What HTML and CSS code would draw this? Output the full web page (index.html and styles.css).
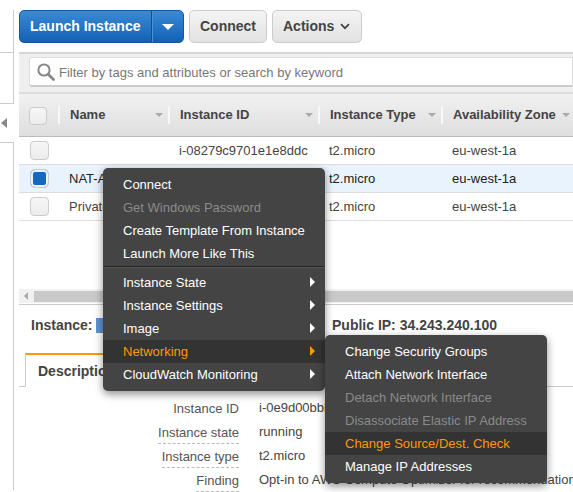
FILE: index.html
```html
<!DOCTYPE html>
<html lang="en">
	<head>
		<meta name="viewport" content="width=device-width, initial-scale=1">
		<title>Instances</title>
		<link rel="stylesheet" href="styles.css">
	</head>

	<body>
		<div id="side">
			<div class="side-box first"></div>
			<div class="side-box second"></div>
			<div class="side-toggle"><span class="arrow-left"></span></div>
			<div class="side-box last"></div>
		</div>

		<div id="main">
			<div id="toolbar">
				<div class="split-btn">
					<span class="launch">Launch Instance</span>
					<span class="launch-caret"><span class="caret-white"></span></span>
				</div>
				<span class="btn connect">Connect</span>
				<span class="btn actions">Actions
					<svg class="chevron" width="10" height="7" viewBox="0 0 10 7"><path d="M1 1.2 L5 5.2 L9 1.2" fill="none" stroke="#444" stroke-width="1.7"/></svg>
				</span>
			</div>

			<div id="grid">
				<div id="filter">
					<div class="search">
						<svg width="20" height="20" viewBox="0 0 20 20"><circle cx="8" cy="8" r="5.6" fill="none" stroke="#888" stroke-width="2"/><path d="M12.2 12.2 L17.5 17.5" stroke="#888" stroke-width="2.8" stroke-linecap="round"/></svg>
						<span class="search-text">Filter by tags and attributes or search by keyword</span>
					</div>
				</div>

				<div class="row head">
					<div class="cell check-cell"><span class="check"></span></div>
					<div class="cell">Name<span class="sort"></span></div>
					<div class="cell">Instance ID<span class="sort"></span></div>
					<div class="cell">Instance Type<span class="sort"></span></div>
					<div class="cell last-cell">Availability Zone<span class="sort"></span></div>
				</div>
				<div class="row">
					<div class="cell check-cell"><span class="check"></span></div>
					<div class="cell"></div>
					<div class="cell">i-08279c9701e1e8ddc</div>
					<div class="cell">t2.micro</div>
					<div class="cell">eu-west-1a</div>
				</div>
				<div class="row selected">
					<div class="cell check-cell"><span class="check on"></span></div>
					<div class="cell">NAT-A</div>
					<div class="cell"></div>
					<div class="cell">t2.micro</div>
					<div class="cell">eu-west-1a</div>
				</div>
				<div class="row">
					<div class="cell check-cell"><span class="check"></span></div>
					<div class="cell">Private</div>
					<div class="cell"></div>
					<div class="cell">t2.micro</div>
					<div class="cell">eu-west-1a</div>
				</div>

				<div id="grid-space"></div>

				<div id="hscroll">
					<span class="scroll-left"></span>
					<div class="thumb"></div>
				</div>
			</div>

			<div id="summary">
				<span class="summary-id">Instance: <span class="id-chip"></span></span>
				<span class="summary-ip">Public IP: 34.243.240.100</span>
			</div>

			<div id="tabs">
				<div class="tab">Description</div>
			</div>

			<div id="details">
				<div class="label">Instance ID</div><div class="value">i-0e9d00bbb</div>
				<div class="label"><span class="dashed">Instance state</span></div><div class="value">running</div>
				<div class="label"><span class="dashed">Instance type</span></div><div class="value">t2.micro</div>
				<div class="label"><span class="dashed">Finding</span></div><div class="value">Opt-in to AWS Compute Optimizer for recommendations</div>
			</div>
		</div>

		<div id="menu" class="menu">
			<a>Connect</a>
			<a class="off">Get Windows Password</a>
			<a>Create Template From Instance</a>
			<a>Launch More Like This</a>
			<div class="sep"></div>
			<a class="sub">Instance State</a>
			<a class="sub">Instance Settings</a>
			<a class="sub">Image</a>
			<a class="sub hot">Networking</a>
			<a class="sub">CloudWatch Monitoring</a>
		</div>

		<div id="submenu" class="menu">
			<a>Change Security Groups</a>
			<a>Attach Network Interface</a>
			<a class="off">Detach Network Interface</a>
			<a class="off">Disassociate Elastic IP Address</a>
			<a class="hot">Change Source/Dest. Check</a>
			<a>Manage IP Addresses</a>
		</div>
	</body>

</html>
```

FILE: styles.css
```css
* {
	box-sizing: border-box;
}
html {
	font-family: "Liberation Sans", Arial, sans-serif;
	font-size: 13px;
	color: #444;
	background: white;
}
body {
	margin: 0;
	width: 573px;
	height: 492px;
	overflow: hidden;
	position: relative;
	display: flex;
}

/* left collapsed panel */
#side {
	width: 14px;
	flex: none;
	padding-top: 10px;
	display: flex;
	flex-direction: column;
}
.side-box {
	border-right: solid 1px #ccc;
}
.side-box.first {
	height: 43px;
	border-bottom: solid 1px #ccc;
}
.side-box.second {
	height: 51px;
	border-bottom: solid 1px #ccc;
}
.side-toggle {
	height: 38px;
	display: flex;
	align-items: center;
	padding-left: 1px;
}
.arrow-left {
	border: solid 5px transparent;
	border-left: 0;
	border-right: solid 6px #888;
}
.side-box.last {
	height: 348px;
	border-top: solid 1px #ccc;
}

#main {
	width: 554px;
	margin-left: 5px;
	flex: none;
}

/* toolbar */
#toolbar {
	height: 43px;
	padding-top: 10px;
	display: flex;
	gap: 5px;
}
.split-btn {
	display: flex;
	height: 33px;
	border-radius: 5px;
	overflow: hidden;
	background: linear-gradient(#3b8ad6, #1261b5);
	border: solid 1px #15589f;
	color: white;
	font-size: 14px;
	font-weight: bold;
}
.launch {
	width: 132px;
	line-height: 31px;
	padding-left: 10px;
	border-right: solid 1px #0f4f94;
}
.launch-caret {
	width: 31px;
	border-left: solid 1px #4d91d3;
	display: flex;
	align-items: center;
	justify-content: center;
}
.caret-white {
	border: solid 6px transparent;
	border-bottom: 0;
	border-top: solid 6px white;
}
.btn {
	height: 33px;
	line-height: 31px;
	padding: 0 10px;
	border: solid 1px #ccc;
	border-radius: 5px;
	background: linear-gradient(#f4f4f4, #e2e2e2);
	font-size: 14px;
	font-weight: bold;
}
.connect {
	width: 78px;
}
.actions {
	width: 90px;
}
.chevron {
	margin-left: 2px;
	vertical-align: 1px;
}

/* instance table */
#grid {
	margin-top: 9px;
	width: 554px;
	border-top: solid 2px #d5d5d5;
}
#filter {
	height: 40px;
	padding: 3px 0 0 10px;
	background: #efefef;
	border-bottom: solid 2px #ddd;
}
.search {
	height: 30px;
	display: flex;
	align-items: center;
	gap: 3px;
	padding-left: 6px;
	background: white;
	border: solid 1px #ddd;
	border-bottom: solid 2px #ccc;
	border-radius: 3px 0 0 3px;
	color: #777;
}
.search-text {
	padding-top: 2px;
}
.row {
	display: grid;
	grid-template-columns: 41px 110px 150px 123px 1fr;
	height: 28px;
	align-items: center;
	border-bottom: solid 1px #ddd;
}
.row .cell {
	padding-left: 9px;
	white-space: nowrap;
	position: relative;
}
.row .check-cell {
	padding-left: 11px;
}
.row.head {
	height: 43px;
	background: linear-gradient(#f1f1f1, #dedede);
	border-bottom: solid 1px #bbb;
	font-weight: bold;
}
.row.head .cell {
	height: 18px;
	line-height: 18px;
	padding-left: 10px;
	border-right: solid 2px #f8f8f8;
}
.row.head .check-cell {
	padding-left: 10px;
}
.row.head .last-cell {
	border-right: 0;
}
.row.selected {
	background: #e9f3fd;
	color: #222;
}
.sort {
	position: absolute;
	right: 5px;
	top: 7px;
	border: solid 4px transparent;
	border-bottom: 0;
	border-top: solid 4px #aaa;
}
.row.head .last-cell .sort {
	right: 3px;
}
.check {
	display: block;
	width: 19px;
	height: 19px;
	border: solid 1px #ccc;
	border-radius: 4px;
	background: linear-gradient(#f7f7f7, #ececec);
}
.row.head .check {
	width: 18px;
	height: 18px;
	margin-top: 1px;
}
.check.on {
	border-radius: 5px;
	background: #1668bf;
	box-shadow: inset 0 0 0 2px #eef2f7;
}
#grid-space {
	height: 68px;
}
#hscroll {
	height: 14px;
	display: flex;
	align-items: center;
	background: #f1f1f1;
	padding-left: 5px;
	gap: 6px;
}
.scroll-left {
	border: solid 4px transparent;
	border-left: 0;
	border-right: solid 4px #aaa;
}
.thumb {
	flex: 1;
	height: 11px;
	background: #c9c9c9;
}

/* details */
#summary {
	margin-top: 1px;
	border-top: solid 1px #ccc;
	height: 41px;
	display: flex;
	align-items: center;
	padding: 0 0 0 12px;
	font-size: 14px;
	font-weight: bold;
}
.summary-id {
	width: 301px;
}
.id-chip {
	display: inline-block;
	width: 60px;
	height: 15px;
	vertical-align: -3px;
	background: #5b93d1;
}
#tabs {
	margin-top: 8px;
	height: 34px;
	padding-left: 6px;
	border-bottom: solid 1px #ccc;
}
.tab {
	width: 130px;
	height: 34px;
	padding: 8px 0 0 12px;
	border-left: solid 1px #ccc;
	border-right: solid 1px #ccc;
	border-top: solid 2px #f90;
	background: white;
	font-size: 14px;
	font-weight: bold;
}
#details {
	margin-top: 10px;
	display: grid;
	grid-template-columns: 220px 1fr;
	column-gap: 20px;
	grid-auto-rows: 24px;
	white-space: nowrap;
}
.label {
	text-align: right;
	color: #555;
	padding-top: 4px;
}
.dashed {
	display: inline-block;
	height: 19px;
	border-bottom: dashed 1px #bbb;
}
.value {
	padding-top: 3px;
	overflow: hidden;
}

/* context menus */
.menu {
	position: absolute;
	width: 222px;
	padding: 5px 0;
	background: #444;
	border-radius: 5px;
	box-shadow: 0 3px 8px rgba(0, 0, 0, .45);
	color: white;
}
#menu {
	left: 103px;
	top: 168px;
}
#submenu {
	left: 325px;
	top: 335px;
}
.menu a {
	display: block;
	height: 23px;
	line-height: 23px;
	padding-left: 20px;
	position: relative;
	white-space: nowrap;
}
.menu a.off {
	color: #8a8a8a;
}
.menu a.hot {
	background: #333;
	color: #f90;
}
.menu a.sub::after {
	position: absolute;
	right: 10px;
	top: 6px;
	border: solid 5px transparent;
	border-right: 0;
	border-left: solid 5px white;
	content: "";
}
.menu a.sub.hot::after {
	border-left-color: #f90;
}
.sep {
	margin: 1px 1px 3px;
	border-top: solid 1px #222;
	border-bottom: solid 1px #555;
}
```
